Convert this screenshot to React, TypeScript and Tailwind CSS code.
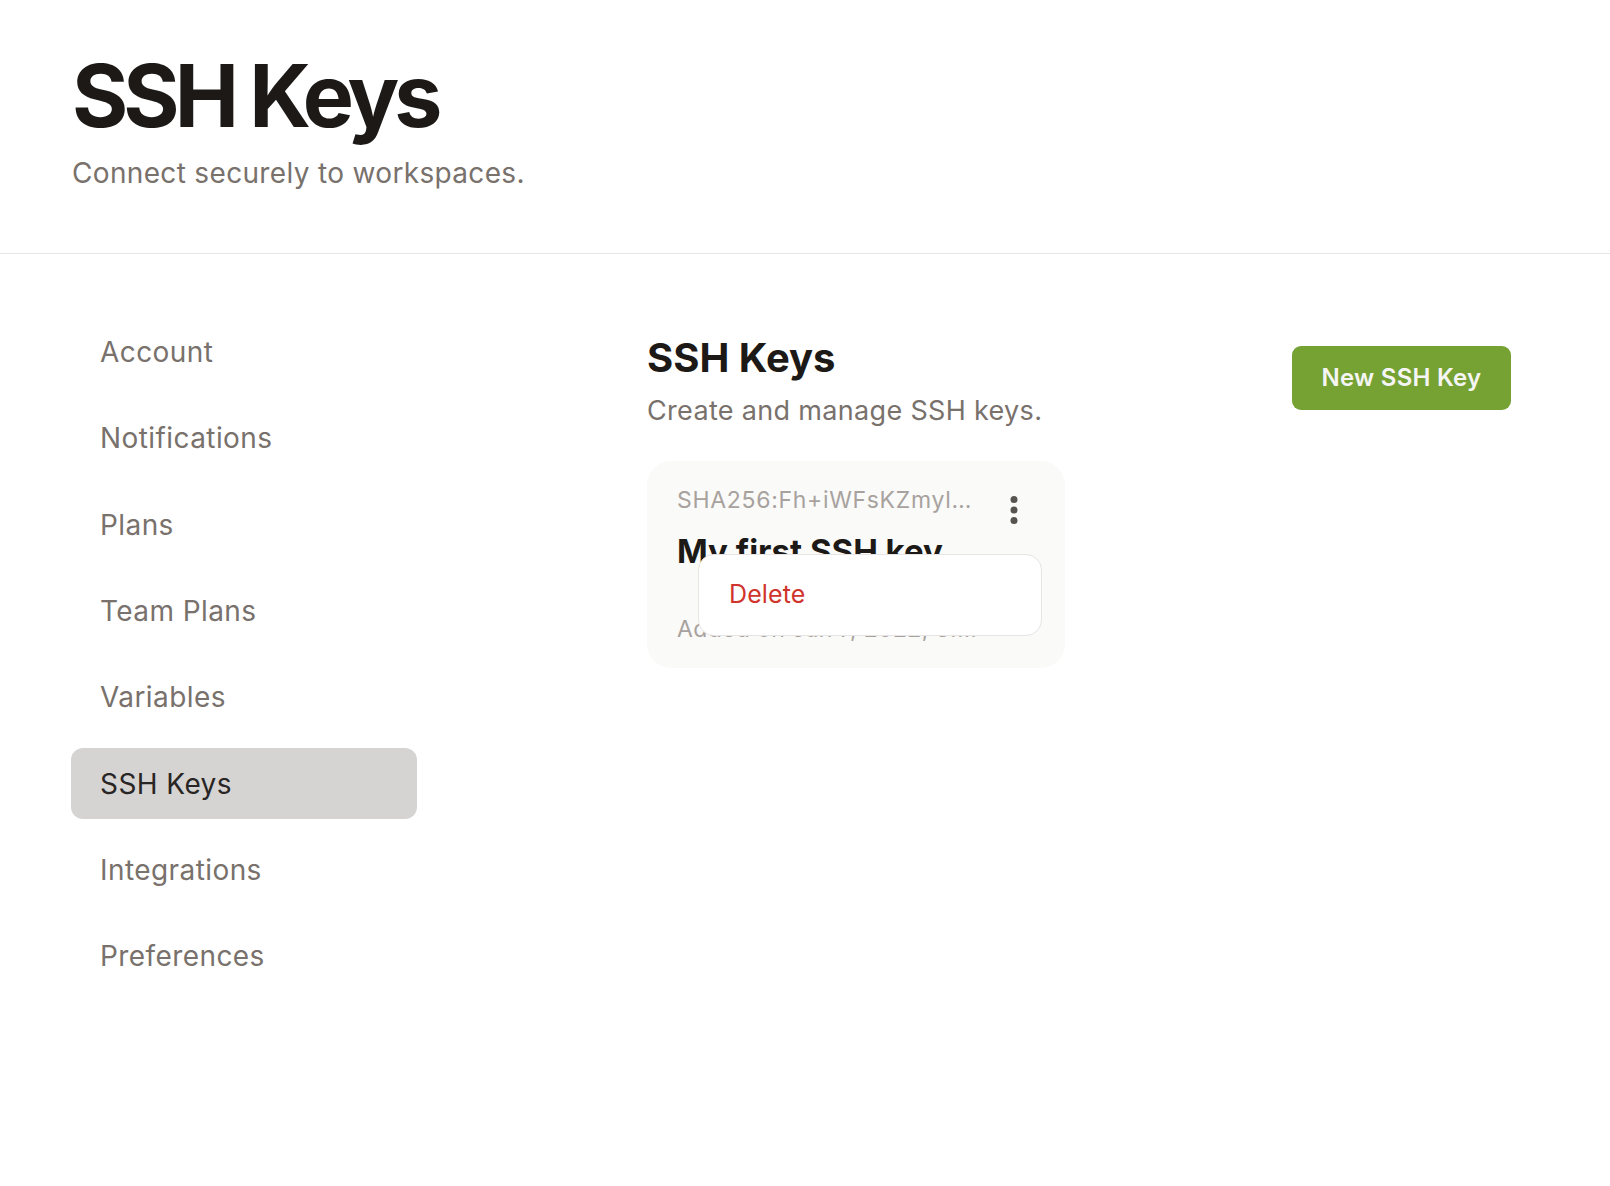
import React from "react";

const navItems = [
  "Account",
  "Notifications",
  "Plans",
  "Team Plans",
  "Variables",
  "SSH Keys",
  "Integrations",
  "Preferences",
];

export default function App() {
  return (
    <div className="min-h-[1186px] bg-white font-['Inter',sans-serif] antialiased">
      <header className="border-b border-[#e7e5e4] px-[72px] pt-[53px] pb-[62px]">
        <h1 className="text-[86px] font-bold leading-none tracking-[-0.058em] text-[#1c1917]">
          SSH Keys
        </h1>
        <p className="mt-[18px] text-[28px] leading-[1.2] tracking-[0.012em] text-[#78716c]">
          Connect securely to workspaces.
        </p>
      </header>

      <main className="flex px-[71px] pt-[63px]">
        <nav className="flex w-[346px] shrink-0 flex-col gap-[15.3px]">
          {navItems.map((item) => {
            const active = item === "SSH Keys";
            return (
              <div
                key={item}
                className={
                  active
                    ? "flex h-[71px] items-center rounded-[12px] bg-[#d6d4d2] pl-[29px] text-[28px] tracking-[0.015em] text-[#292524]"
                    : "flex h-[71px] items-center rounded-[12px] pl-[29px] text-[28px] tracking-[0.015em] text-[#78716c]"
                }
              >
                {item}
              </div>
            );
          })}
        </nav>

        <section className="ml-[230px] flex-1 pr-[28px] pt-[17px]">
          <div className="flex items-start justify-between">
            <div>
              <h2 className="text-[40px] font-bold leading-[1.2] text-[#1c1917]">
                SSH Keys
              </h2>
              <p className="mt-[13px] text-[27px] leading-[1.2] tracking-[0.012em] text-[#78716c]">
                Create and manage SSH keys.
              </p>
            </div>
            <button className="mt-[12px] flex h-[64px] w-[219px] items-center justify-center rounded-[9px] bg-[#76a234] text-[24px] font-semibold tracking-[0.01em] text-[#f5f5f4]">
              New SSH Key
            </button>
          </div>

          <div className="relative mt-[34px] h-[207px] w-[418px] rounded-[24px] bg-[#fafaf9] pl-[30px] pr-[47px] pt-[22px]">
            <div className="flex items-start justify-between">
              <div className="text-[23px] leading-[1.5] tracking-[0.03em] text-[#a8a29e]">
                SHA256:Fh+iWFsKZmyl…
              </div>
              <svg
                width="8"
                height="28"
                viewBox="0 0 8 28"
                className="mt-[13px]"
                fill="#57534e"
              >
                <circle cx="4" cy="3.5" r="3.5" />
                <circle cx="4" cy="14" r="3.5" />
                <circle cx="4" cy="24.5" r="3.5" />
              </svg>
            </div>
            <div className="mt-[8px] text-[33px] font-bold leading-[1.2] text-[#1c1917]">
              My first SSH key
            </div>
            <div className="mt-[40px] text-[23px] leading-[1.5] tracking-[0.015em] text-[#a8a29e]">
              Added on Jan 7, 2022, 3:…
            </div>

            <div className="absolute left-[51px] top-[93px] flex h-[82px] w-[344px] items-center rounded-[16px] border border-[#e7e5e4] bg-white pl-[30px]">
              <span className="text-[25px] tracking-[0.005em] text-[#d0342c]">Delete</span>
            </div>
          </div>
        </section>
      </main>
    </div>
  );
}
